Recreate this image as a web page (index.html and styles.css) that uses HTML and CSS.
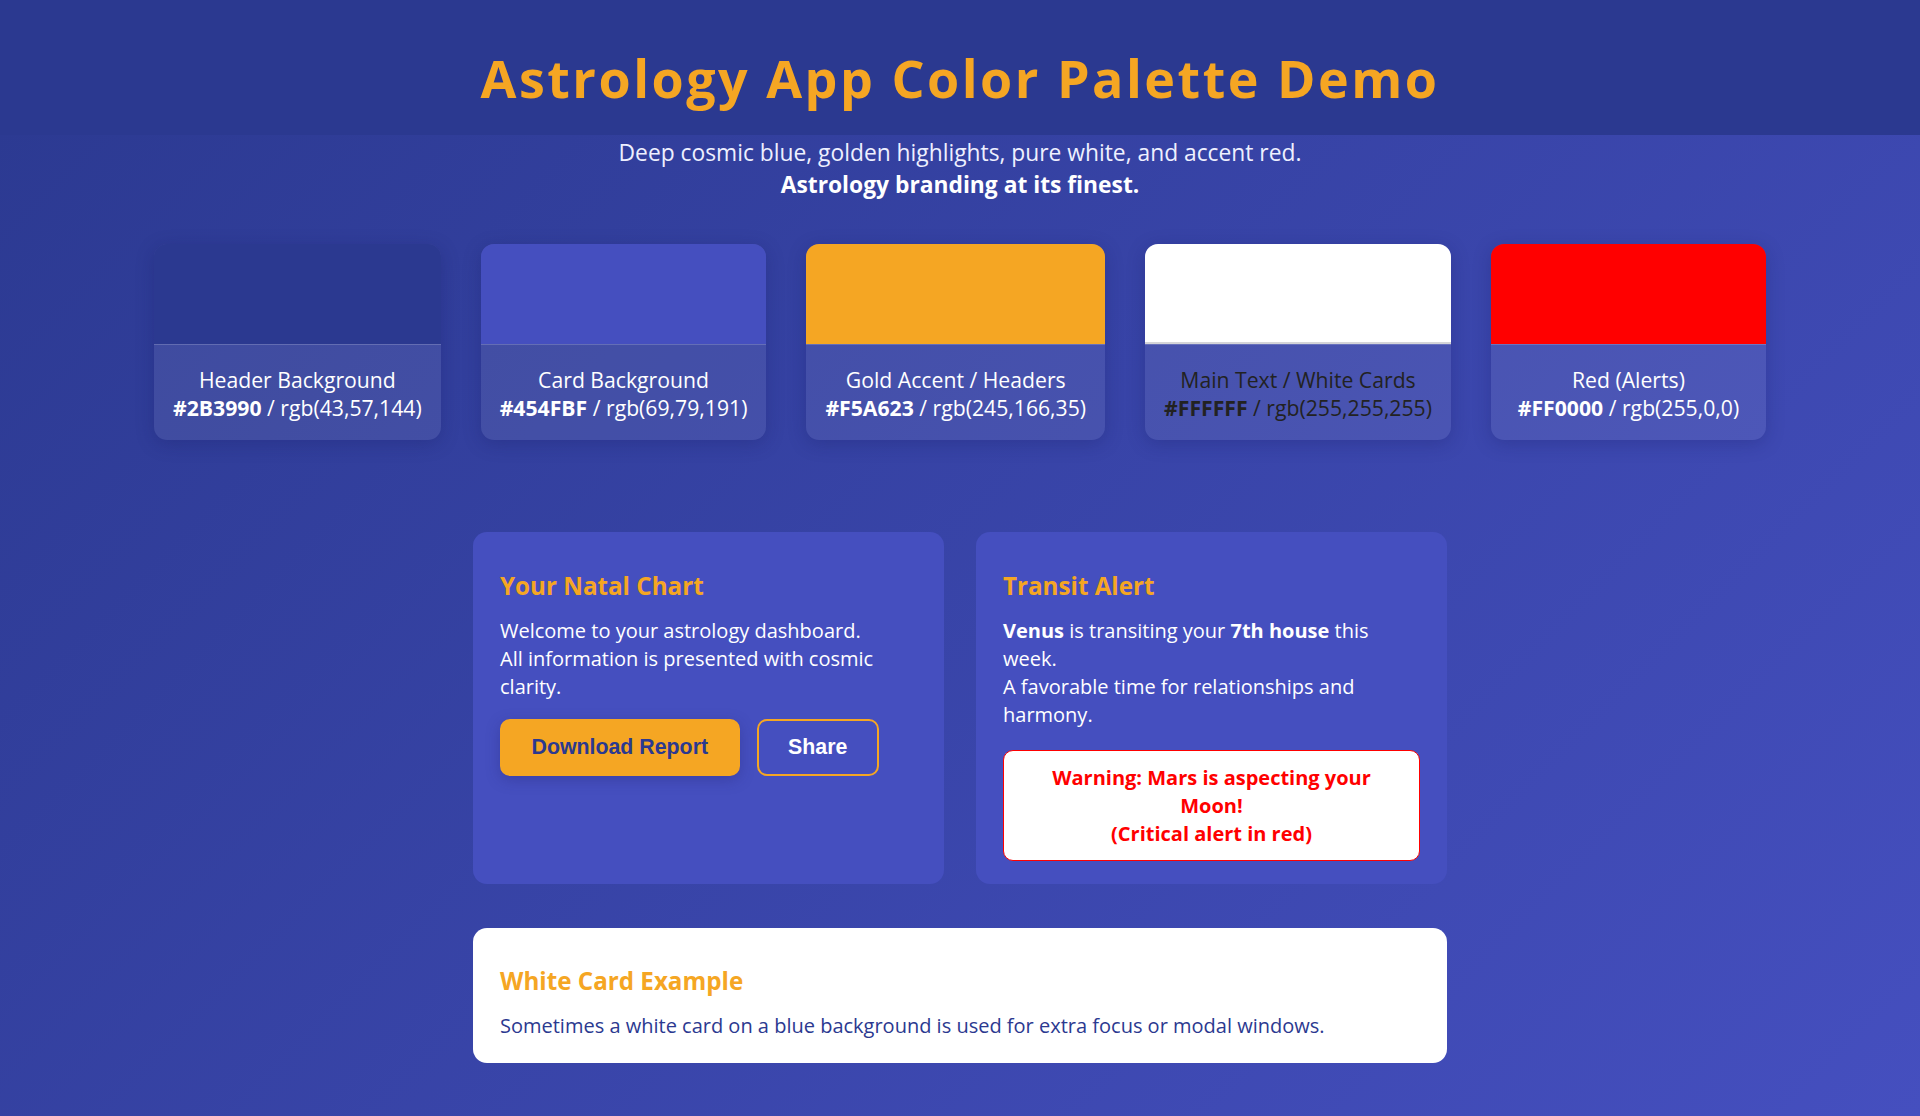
FILE: index.html
```html
<!DOCTYPE html>
<html lang="en">
<head>
<meta charset="utf-8">
<title>Astrology App Color Palette Demo</title>
<link rel="stylesheet" href="styles.css">
</head>
<body>
<header class="site-header">
  <h1 class="title">Astrology App Color Palette Demo</h1>
</header>
<p class="intro">Deep cosmic blue, golden highlights, pure white, and accent red.<br><strong>Astrology branding at its finest.</strong></p>

<section class="palette">
  <div class="swatch-card">
    <div class="swatch swatch-header"></div>
    <div class="swatch-info">Header Background<br><b>#2B3990</b> / rgb(43,57,144)</div>
  </div>
  <div class="swatch-card">
    <div class="swatch swatch-card-bg"></div>
    <div class="swatch-info">Card Background<br><b>#454FBF</b> / rgb(69,79,191)</div>
  </div>
  <div class="swatch-card">
    <div class="swatch swatch-gold"></div>
    <div class="swatch-info">Gold Accent / Headers<br><b>#F5A623</b> / rgb(245,166,35)</div>
  </div>
  <div class="swatch-card">
    <div class="swatch swatch-white"></div>
    <div class="swatch-info swatch-info-dark">Main Text / White Cards<br><b>#FFFFFF</b> / rgb(255,255,255)</div>
  </div>
  <div class="swatch-card">
    <div class="swatch swatch-red"></div>
    <div class="swatch-info">Red (Alerts)<br><b>#FF0000</b> / rgb(255,0,0)</div>
  </div>
</section>

<main class="content">
  <div class="card-row">
    <div class="card">
      <h2 class="card-title">Your Natal Chart</h2>
      <p class="card-text">Welcome to your astrology dashboard.<br>All information is presented with cosmic clarity.</p>
      <div class="actions">
        <button class="btn btn-primary">Download Report</button>
        <button class="btn btn-outline">Share</button>
      </div>
    </div>
    <div class="card">
      <h2 class="card-title">Transit Alert</h2>
      <p class="card-text"><b>Venus</b> is transiting your <b>7th house</b> this week.<br>A favorable time for relationships and harmony.</p>
      <div class="alert">Warning: Mars is aspecting your Moon!<br>(Critical alert in red)</div>
    </div>
  </div>
  <div class="white-card">
    <h2 class="card-title">White Card Example</h2>
    <p class="card-text white-text">Sometimes a white card on a blue background is used for extra focus or modal windows.</p>
  </div>
</main>
</body>
</html>
```

FILE: styles.css
```css
* { box-sizing: border-box; }

html, body { margin: 0; padding: 0; }

body {
  min-height: 100vh;
  background: linear-gradient(135deg, #2B3990 0%, #454FBF 100%);
  font-family: "Segoe UI", "Open Sans", "Noto Sans", sans-serif;
  font-size: 20px;
  color: #ffffff;
}

.site-header {
  background: #2B3990;
  padding: 43px 0 22px;
  text-align: center;
}

.title {
  margin: 0;
  font-size: 52px;
  line-height: 70px;
  font-weight: 700;
  letter-spacing: 2.5px;
  color: #F5A623;
}

.intro {
  margin: 0;
  padding-top: 2px;
  text-align: center;
  font-size: 22.8px;
  line-height: 32px;
  color: #eef0ff;
}

.intro strong { font-weight: 700; color: #ffffff; }

.palette {
  display: flex;
  justify-content: center;
  gap: 40px;
  margin-top: 43px;
}

.swatch-card {
  min-width: 275px;
  border-radius: 13px;
  overflow: hidden;
  background: rgba(255, 255, 255, 0.08);
  box-shadow: 0 4px 18px rgba(20, 25, 90, 0.25);
}

.swatch { height: 100px; }
.swatch-header { background: #2B3990; }
.swatch-card-bg { background: #454FBF; }
.swatch-gold { background: #F5A623; }
.swatch-white { background: #ffffff; border-bottom: 2px solid #d4d4d8; }
.swatch-red { background: #FF0000; }

.swatch-info {
  border-top: 1px solid rgba(255, 255, 255, 0.18);
  padding: 21px 19px 18px;
  text-align: center;
  font-size: 21.2px;
  line-height: 28px;
  color: #ffffff;
  white-space: nowrap;
}

.swatch-info-dark { color: #222222; }

.content {
  width: 974px;
  margin: 92px auto 0;
  padding-bottom: 40px;
}

.card-row {
  display: grid;
  grid-template-columns: 1fr 1fr;
  gap: 32px;
}

.card {
  background: #454FBF;
  border-radius: 14px;
  padding: 36px 27px 23px;
}

.card-title {
  margin: 0 0 13px;
  font-size: 24.2px;
  line-height: 36px;
  font-weight: 700;
  color: #F5A623;
}

.card-text {
  margin: 0;
  line-height: 28px;
}

.card-text b { font-weight: 700; }

.actions {
  display: flex;
  gap: 17px;
  margin-top: 18px;
}

.btn {
  font-family: "Liberation Sans", Arial, sans-serif;
  font-size: 21.33px;
  font-weight: 700;
  line-height: 24.5px;
  padding: 14px 29.5px;
  border: 2.5px solid #F5A623;
  border-radius: 10px;
  cursor: pointer;
}

.btn-primary {
  background: #F5A623;
  color: #2B3990;
  box-shadow: 0 4px 14px rgba(40, 40, 120, 0.35);
}

.btn-outline {
  background: transparent;
  color: #ffffff;
}

.alert {
  margin-top: 21px;
  background: #ffffff;
  border: 1.5px solid #FF0000;
  border-radius: 10px;
  padding: 13px 16px 12px;
  text-align: center;
  line-height: 28px;
  font-weight: 700;
  color: #FF0000;
}

.white-card {
  margin-top: 44px;
  background: #ffffff;
  border-radius: 14px;
  padding: 35px 27px 23px;
}

.white-text { color: #2B3990; }
```
